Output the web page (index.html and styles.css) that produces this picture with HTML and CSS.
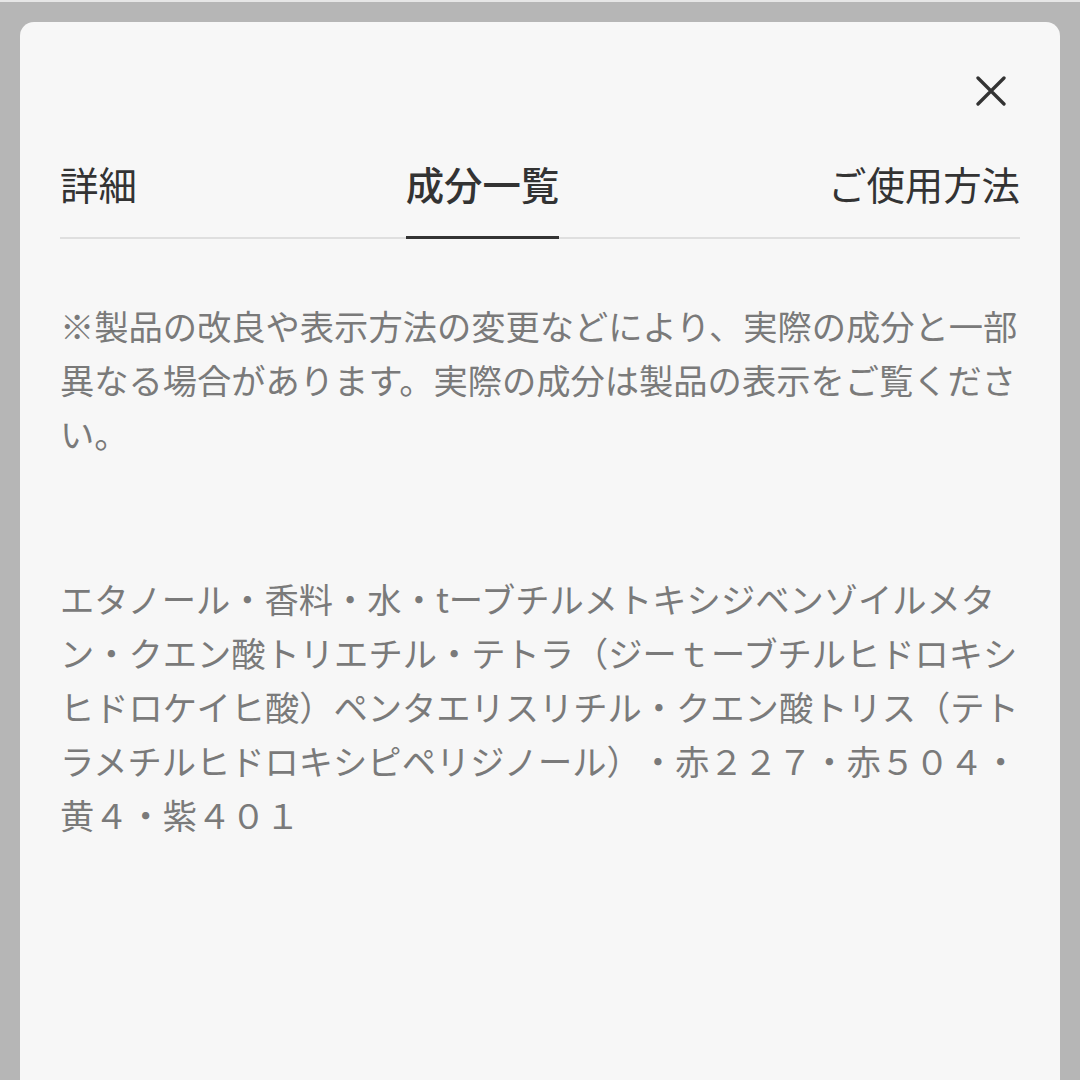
FILE: index.html
```html
<!DOCTYPE html>
<html lang="ja">
<head>
<meta charset="utf-8">
<title>成分一覧</title>
<link rel="stylesheet" href="styles.css">
</head>
<body>
<div class="topline"></div>
<div class="panel">
  <div class="close-row">
    <button class="close" aria-label="閉じる">
      <svg width="30" height="30" viewBox="0 0 30 30"><path d="M2 2 L28 28 M28 2 L2 28" stroke="#333" stroke-width="3.3" stroke-linecap="round" fill="none"/></svg>
    </button>
  </div>
  <div class="tabs">
    <div class="tab">詳細</div>
    <div class="tab active">成分一覧</div>
    <div class="tab">ご使用方法</div>
  </div>
  <p class="note">※製品の改良や表示方法の変更などにより、実際の成分と一部異なる場合があります。実際の成分は製品の表示をご覧ください。</p>
  <p class="ingredients">エタノール・香料・水・tーブチルメトキシジベンゾイルメタン・クエン酸トリエチル・テトラ（ジーｔーブチルヒドロキシヒドロケイヒ酸）ペンタエリスリチル・クエン酸トリス（テトラメチルヒドロキシピペリジノール）・赤２２７・赤５０４・黄４・紫４０１</p>
</div>
</body>
</html>
```

FILE: styles.css
```css
html, body {
  margin: 0;
  padding: 0;
  height: 100%;
  overflow: hidden;
}
body {
  background: #b6b6b6;
  font-family: "Noto Sans CJK JP", "Noto Sans", sans-serif;
  text-spacing-trim: space-all;
}
.topline {
  height: 2px;
  background: #e6e6e6;
}
.panel {
  margin: 20px 20px 0 20px;
  background: #f7f7f7;
  border-radius: 14px 14px 0 0;
  padding: 0 40px;
  height: 1100px;
  box-sizing: border-box;
}
.close-row {
  height: 133px;
  display: flex;
  justify-content: flex-end;
  align-items: flex-start;
}
.close {
  margin-top: 54px;
  margin-right: 14px;
  width: 30px;
  height: 30px;
  padding: 0;
  border: 0;
  background: transparent;
  display: flex;
}
.tabs {
  display: flex;
  justify-content: space-between;
  border-bottom: 2px solid #dfdfdf;
}
.tab {
  font-size: 38.4px;
  line-height: 56px;
  color: #333;
  padding-bottom: 26px;
}
.tab.active {
  font-weight: 500;
  border-bottom: 3px solid #333;
  margin-bottom: -2px;
  padding-bottom: 25px;
}
.note, .ingredients {
  margin: 0;
  font-size: 34.28px;
  line-height: 54px;
  color: #7a7a7a;
}
.note {
  margin-top: 59px;
}
.ingredients {
  margin-top: 111px;
}
```
